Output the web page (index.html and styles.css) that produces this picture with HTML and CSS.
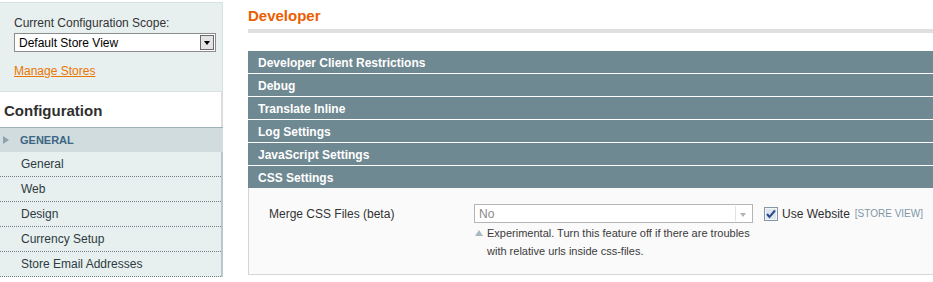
FILE: index.html
```html
<!DOCTYPE html>
<html lang="en">
<head>
    <meta charset="UTF-8">
    <title>Configuration / Developer</title>
    <link rel="stylesheet" href="styles.css">
</head>
<body>

<div class="page">
    <div class="side">
        <div class="scope">
            <div class="scope-label">Current Configuration Scope:</div>
            <div class="scope-select">
                <span>Default Store View</span>
                <span class="scope-drop"></span>
            </div>
            <a class="manage" href="#">Manage Stores</a>
        </div>
        <h3 class="side-title">Configuration</h3>
        <div class="tab-group"><span class="tab-arrow"></span>GENERAL</div>
        <ul class="tabs">
            <li>General</li>
            <li>Web</li>
            <li>Design</li>
            <li>Currency Setup</li>
            <li>Store Email Addresses</li>
        </ul>
    </div>

    <div class="main">
        <h3 class="main-title">Developer</h3>

        <div class="section-head">Developer Client Restrictions</div>
        <div class="section-head">Debug</div>
        <div class="section-head">Translate Inline</div>
        <div class="section-head">Log Settings</div>
        <div class="section-head">JavaScript Settings</div>
        <div class="section-head open">CSS Settings</div>

        <div class="fieldset">
            <div class="row">
                <div class="label">Merge CSS Files (beta)</div>
                <div class="value">
                    <div class="select-off">
                        <span>No</span>
                        <span class="select-off-drop"></span>
                    </div>
                    <p class="note">Experimental. Turn this feature off if there are troubles with relative urls inside css-files.</p>
                </div>
                <div class="use-default">
                    <svg class="check" width="14" height="14" viewBox="0 0 14 14">
                        <rect x="0.5" y="0.5" width="13" height="13" fill="#dfe6ee" stroke="#8497a6"/>
                        <rect x="1.5" y="1.5" width="11" height="11" fill="none" stroke="#f4f7fa"/>
                        <path d="M3 7 L5.5 10 L11 3.5" fill="none" stroke="#2a4b8d" stroke-width="2"/>
                    </svg>
                    <span>Use Website</span>
                </div>
                <div class="scope-tag">[STORE VIEW]</div>
            </div>
        </div>
    </div>
</div>

</body>
</html>
```

FILE: styles.css
```css
html, body {
    overflow: hidden;
}

body {
    margin: 0;
    font-family: "Liberation Sans", Arial, sans-serif;
    font-size: 12px;
    color: #2f2f2f;
    background: #fff;
}

.page {
    display: flex;
    width: 960px;
}

/* left column */
.side {
    width: 223px;
    flex-shrink: 0;
}

.scope {
    margin-top: 2px;
    background: #e7efef;
    border-top: 1px solid #d6e1e1;
    border-bottom: 1px solid #d6e1e1;
    border-right: 1px solid #d6e1e1;
    padding: 13px 0 12px 14px;
}

.scope-label {
    line-height: 15px;
    color: #333;
}

.scope-select {
    display: flex;
    align-items: center;
    justify-content: space-between;
    width: 196px;
    height: 17px;
    margin-top: 2px;
    background: #fff;
    border: 1px solid #8c8c8c;
    padding-left: 4px;
    color: #000;
}

.scope-drop {
    position: relative;
    width: 14px;
    height: 15px;
    margin-right: 1px;
    background: #e4e4e4;
    border: 1px solid #6a6a6a;
    box-sizing: border-box;
}

.scope-drop::after {
    content: "";
    position: absolute;
    left: 3px;
    top: 5px;
    border-left: 3.5px solid transparent;
    border-right: 3.5px solid transparent;
    border-top: 4px solid #000;
}

.manage {
    display: inline-block;
    margin-top: 12px;
    line-height: 15px;
    color: #ea7601;
}

.side-title {
    margin: 0;
    height: 35px;
    line-height: 38px;
    padding-left: 4px;
    font-size: 15px;
    font-weight: bold;
    color: #2f2f2f;
    background: #fff;
    border-right: 2px solid #dcdcdc;
}

.tab-group {
    display: flex;
    align-items: center;
    height: 24px;
    padding-left: 3px;
    background: #d1dcdf;
    border-top: 1px solid #9fb2b9;
    font-size: 11px;
    font-weight: bold;
    color: #3b6683;
}

.tab-arrow {
    width: 0;
    height: 0;
    margin-right: 11px;
    border-top: 4px solid transparent;
    border-bottom: 4px solid transparent;
    border-left: 6px solid #8ea2ac;
}

.tabs {
    list-style: none;
    margin: 0;
    padding: 0;
    background: #e7efef;
    border-right: 2px solid #b9c8cc;
}

.tabs li {
    height: 24px;
    line-height: 24px;
    padding-left: 21px;
    border-bottom: 1px dotted #6f7f86;
    color: #2d3b42;
}

/* right column */
.main {
    flex: 1;
    margin-left: 25px;
}

.main-title {
    margin: 0 0 18px;
    padding: 7px 0 4px;
    line-height: 18px;
    font-size: 15px;
    font-weight: bold;
    color: #eb5e00;
    border-bottom: 4px solid #dfdfdf;
}

.section-head {
    height: 22px;
    line-height: 24px;
    margin-bottom: 1px;
    padding-left: 10px;
    background: #6f8992;
    color: #fff;
    font-weight: bold;
}

.section-head.open {
    margin-bottom: 0;
}

.fieldset {
    background: #fafafa;
    border: 1px solid #d6d6d6;
    border-top: none;
    padding: 16px 0 14px 20px;
}

.row {
    display: flex;
    align-items: flex-start;
}

.label {
    width: 205px;
    line-height: 20px;
    color: #333;
}

.value {
    width: 279px;
}

.select-off {
    display: flex;
    align-items: center;
    justify-content: space-between;
    height: 17px;
    background: #fff;
    border: 1px solid #b5b5b5;
    padding-left: 4px;
    color: #8a8a8a;
}

.select-off-drop {
    position: relative;
    width: 15px;
    height: 15px;
    margin-right: 1px;
    border-left: 1px solid #e3e3e3;
}

.select-off-drop::after {
    content: "";
    position: absolute;
    left: 4px;
    top: 7px;
    border-left: 3.5px solid transparent;
    border-right: 3.5px solid transparent;
    border-top: 4px solid #b3b3b3;
}

.note {
    position: relative;
    margin: 1px 0 0;
    padding-left: 13px;
    font-size: 11px;
    line-height: 18px;
    color: #3a3a3a;
}

.note::before {
    content: "";
    position: absolute;
    left: 1px;
    top: 6px;
    border-left: 4px solid transparent;
    border-right: 4px solid transparent;
    border-bottom: 6px solid #a9b7bf;
}

.use-default {
    display: flex;
    align-items: center;
    gap: 4px;
    margin-left: 11px;
    height: 19px;
    color: #2f2f2f;
}

.check {
    display: block;
}

.scope-tag {
    margin-left: 5px;
    line-height: 19px;
    font-size: 10px;
    color: #7f98a6;
}
```
